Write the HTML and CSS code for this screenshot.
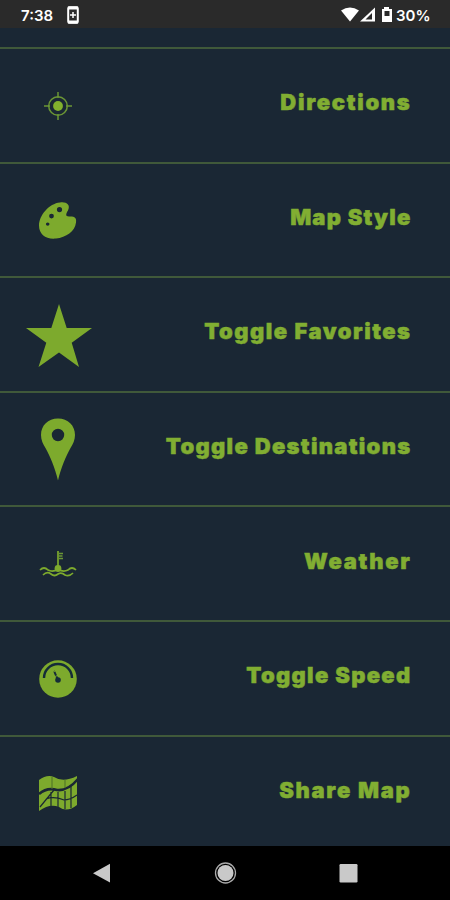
FILE: index.html
```html
<!DOCTYPE html>
<html lang="en">
<head>
    <meta charset="utf-8">
    <title>Map Menu</title>
    <link rel="stylesheet" href="styles.css">
</head>
<body>
    <header class="status-bar">
        <span class="time">7:38</span>
        <svg class="saver" width="12" height="18" viewBox="0 0 12 18">
            <rect x="1.2" y="1.2" width="9.6" height="15.6" rx="1.2" fill="none" stroke="#fff" stroke-width="2"/>
            <path d="M1 2h10M1 16h10" stroke="#fff" stroke-width="3"/>
            <path d="M6 6v6M3 9h6" stroke="#fff" stroke-width="1.5"/>
        </svg>
        <svg class="signals" width="52" height="18" viewBox="0 0 52 18">
            <path d="M0 4.5Q9 -1.5 18 4.5L9 15.5Z" fill="#fff"/>
            <path d="M34 1.5V15.5H19Z" fill="#fff"/>
            <path d="M31 7v6.5h-6.5Z" fill="#2a2a2a"/>
            <path d="M43 1h5v2h3v13H41V3h2Z" fill="#fff"/>
            <path d="M43.5 5h5v5h-5z" fill="#2a2a2a"/>
        </svg>
        <span class="battery">30%</span>
    </header>

    <main class="menu">
        <div class="previous"></div>
        <div class="item">
            <svg class="icon" viewBox="0 0 70 70">
                <circle cx="35" cy="35" r="4.9" fill="#82b12d"/>
                <circle cx="35" cy="35" r="9.3" fill="none" stroke="#6b9635" stroke-width="1.5"/>
                <path d="M35 21v6M35 43v6M21 35h6M43 35h6" stroke="#6b9635" stroke-width="1.5"/>
            </svg>
            <span class="label directions">Directions</span>
        </div>
        <div class="item">
            <svg class="icon" viewBox="0 0 70 70">
                <path fill-rule="evenodd" d="M37 17.5C26 18.5 16 30.5 16 40.5C16 49.5 23 54.5 33 53.5C43 52.5 52 46.5 53 37.5C54 31.5 50 31.5 46 31.5C42 31.5 43 28.5 45 25.5C48 19.5 43 16.5 37 17.5ZM36.5 22a2.6 2.6 0 1 1 0 5.2a2.6 2.6 0 0 1 0-5.2ZM28.5 28.7a2.4 2.4 0 1 1 0 4.8a2.4 2.4 0 0 1 0-4.8ZM24.7 37.5a1.8 1.6 0 1 1 0 3.2a1.8 1.6 0 0 1 0-3.2Z"/>
            </svg>
            <span class="label style">Map Style</span>
        </div>
        <div class="item">
            <svg class="icon" viewBox="0 0 70 70">
                <path d="M36 4L43.7 28H69L48.7 42.7L56 67L36 52.5L15.5 67L23.3 42.7L3 28H28.3Z"/>
            </svg>
            <span class="label favorites">Toggle Favorites</span>
        </div>
        <div class="item">
            <svg class="icon" viewBox="0 0 70 70">
                <path fill-rule="evenodd" d="M35 3.5C25 3.5 18 10.5 18 20C18 25 20 29 22.5 33C27 41 32 53 35 65.5C38 53 43 41 47.5 33C50 29 52 25 52 20C52 10.5 45 3.5 35 3.5ZM35 13.8a6.2 6.2 0 1 1 0 12.4a6.2 6.2 0 0 1 0-12.4Z"/>
            </svg>
            <span class="label destinations">Toggle Destinations</span>
        </div>
        <div class="item">
            <svg class="icon" viewBox="0 0 70 70">
                <path d="M35 22v17" stroke="#82b12d" stroke-width="1.6"/>
                <path d="M36 24.5h4M36 27h3.5M36 29.5h4" stroke="#6b9635" stroke-width="1.3"/>
                <circle cx="35" cy="39.5" r="3.4"/>
                <path class="wave" d="M17 41Q21 37 25 41Q30 43.5 35 40Q40 43.5 45 41Q49 37 53 41M20 46Q24 42 28 45Q31.5 48 35 45Q38.5 43 42 46Q46 48 50 44"/>
            </svg>
            <span class="label weather">Weather</span>
        </div>
        <div class="item">
            <svg class="icon" viewBox="0 0 70 70">
                <circle cx="35" cy="35" r="18.8"/>
                <path d="M21 34A14 14 0 0 1 49 34" fill="none" stroke="#152c38" stroke-width="2.4"/>
                <circle cx="35" cy="36" r="2.8" fill="#152c38"/>
                <path d="M35 36L31 27" stroke="#152c38" stroke-width="2" stroke-dasharray="4 .8"/>
            </svg>
            <span class="label speed">Toggle Speed</span>
        </div>
        <div class="item">
            <svg class="icon" viewBox="0 0 70 70">
                <path d="M16 22Q24 16 31 19Q40 25 54 18V47Q44 55 36 49Q27 45 16 53Z"/>
                <path d="M16 36Q24 29 34 32Q45 33 55 21" fill="none" stroke="#1a2734" stroke-width="2.6"/>
                <path d="M17 49Q26 38 31 32M28 34V48M35 34V49M42 33V51M48 28V50M23 41Q31 38 41 42Q47 42 54 37" fill="none" stroke="#1a2734" stroke-width="1.2"/>
                <path d="M29 19V31M42 22V30" stroke="#4c7026" stroke-width="1"/>
            </svg>
            <span class="label share">Share Map</span>
        </div>
    </main>

    <nav class="nav-bar">
        <svg width="24" height="24" viewBox="0 0 24 24"><path d="M3 12.2L20 2.8V21.5Z"/></svg>
        <svg width="24" height="24" viewBox="0 0 24 24"><circle cx="12.5" cy="12" r="8"/><circle cx="12.5" cy="12" r="10" fill="none" stroke="#aaa" stroke-width="1.3"/></svg>
        <svg width="24" height="24" viewBox="0 0 24 24"><rect x="3.5" y="3" width="18" height="18.5" rx="1.2"/></svg>
    </nav>
</body>
</html>
```
FILE: styles.css
```css
* {
    box-sizing: border-box;
}

body {
    margin: 0;
    height: 900px;
    display: flex;
    flex-direction: column;
    overflow: hidden;
    background-color: #1a2734;
    font-family: Inter, sans-serif;
}

.status-bar {
    display: flex;
    align-items: center;
    flex: 0 0 28px;
    padding: 2px 20px 0 21px;
    background-color: #2a2a2a;
    color: #fff;
    font-size: 15px;
    font-weight: 600;
}

.time {
    width: 46px;
}

.signals {
    margin-left: auto;
    margin-right: 3px;
}

.battery {
    width: 34px;
}

.menu {
    flex: 1;
    min-height: 0;
    overflow: hidden;
}

.previous {
    height: 21px;
    border-bottom: 2px solid #40593a;
}

.item {
    display: flex;
    align-items: center;
    justify-content: space-between;
    height: 114.6px;
    padding: 1px 38.5px 0 23px;
    border-bottom: 2px solid #40593a;
}

.icon {
    width: 70px;
    height: 70px;
    fill: #7daa2d;
}

.wave {
    fill: none;
    stroke: #7daa2d;
    stroke-width: 1.7;
}

.label {
    padding-bottom: 7px;
    color: #81ae32;
    font-size: 22px;
    font-weight: 900;
    letter-spacing: 1.5px;
    white-space: nowrap;
    -webkit-text-stroke: 0.5px #81ae32;
}

.style {
    letter-spacing: 1.2px;
}

.destinations,
.speed {
    letter-spacing: 1.3px;
}

.directions,
.weather,
.share {
    letter-spacing: 1.7px;
}

.nav-bar {
    display: flex;
    flex: 0 0 54px;
    align-items: center;
    justify-content: space-between;
    padding: 0 90px;
    background-color: #000;
    fill: #c9c9c9;
}
```
